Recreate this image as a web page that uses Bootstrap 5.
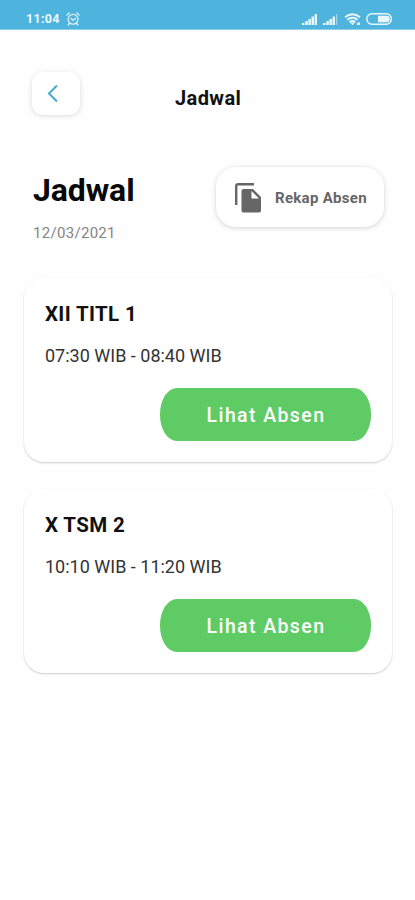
<!DOCTYPE html>
<html lang="id">
<head>
<meta charset="utf-8">
<meta name="viewport" content="width=device-width, initial-scale=1">
<title>Jadwal</title>
<link href="https://cdn.jsdelivr.net/npm/bootstrap@5.3.0/dist/css/bootstrap.min.css" rel="stylesheet">
<style>
body { font-family: Roboto, "Liberation Sans", sans-serif; background: #fefefe; color: #111; min-height: 900px; }
svg { display: block; flex: none; }
.status-bar { height: 30px; background: #4eb3dd; padding: 8px 22px 0 26px; border-bottom: 1px solid #8dcfe9; }
.clock { font-size: 12.5px; font-weight: 700; line-height: 22px; letter-spacing: .3px; color: #eefaff; }
.alarm-icon { margin-left: -2px; }
.signal-icons { margin-top: 4px; }
.top-bar { padding: 42px 32px 0; height: 137px; }
.back-btn { width: 48px; height: 43px; border-radius: 11px; background: #fff; box-shadow: 0 1px 5px rgba(0,0,0,.15); }
.screen-title { font-size: 20px; line-height: 24px; font-weight: 700; margin: 14px 0 0 95px; letter-spacing: .4px; }
.heading-row { padding: 0 31px 0 33px; height: 111px; }
.page-title { font-size: 32px; line-height: 38px; font-weight: 700; margin: 4px 0 0; letter-spacing: -.1px; color: #080808; }
.page-date { font-size: 15px; line-height: 18px; margin-top: 15px; letter-spacing: .3px; color: #858585; }
.recap-btn { width: 168px; height: 60px; border-radius: 20px; background: #fff; box-shadow: 0 1px 5px rgba(0,0,0,.18); padding: 2px 0 0 19px; color: #666; font-size: 15px; font-weight: 700; letter-spacing: .3px; white-space: nowrap; }
.recap-label { margin-left: 14px; }
.schedule { gap: 27px; padding: 0 23px 0 24px; }
.schedule-card { height: 184px; border: 0; border-radius: 20px; background: #fff; box-shadow: 0 1px 2px rgba(0,0,0,.2); padding: 24px 21px 0 21px; }
.class-name { font-size: 20.5px; line-height: 24px; font-weight: 700; margin: 0; letter-spacing: .35px; color: #111; }
.class-time { font-size: 18px; line-height: 22px; margin: 19px 0 21px; color: #333; }
.view-btn { width: 211px; height: 53px; border-radius: 17px / 26px; background: #5fcb64; color: #fff; font-size: 19.5px; font-weight: 500; letter-spacing: 1.4px; padding: 2px 0 0 1px; }
.view-btn:hover { background: #55bd5a; color: #fff; }
</style>
</head>
<body>
<header class="status-bar d-flex justify-content-between align-items-start">
  <div class="d-flex align-items-center gap-2">
    <span class="clock">11:04</span>
    <svg class="alarm-icon" width="14" height="14" viewBox="0 0 14 14" fill="none" stroke="#e2f5fc" stroke-width="1.3" stroke-linecap="round"><circle cx="7" cy="7.3" r="4.9"/><path d="M1 3 3.2 1M13 3 10.8 1M3.3 11.5 2.2 13M10.7 11.5l1.1 1.5M5 6.5l2 1.7 2.2-1.7"/></svg>
  </div>
  <svg class="signal-icons" width="92" height="14" viewBox="0 0 92 14" fill="#e8f7fd">
    <path d="M1 13v-2h2.500v2zM4.300 13V9h2.500v4zM7.400 13V7h2.500v6zM10.500 13V4.500H13V13zM13.600 13V2H16v11z"/>
    <path d="M22 13v-2h2.500v2zM25.300 13V9h2.500v4zM28.400 13V7h2.500v6zM31.500 13V4.500H34V13z"/><path d="M35 13V2h1.3v11z" opacity=".5"/>
    <g fill="none" stroke="#e8f7fd" stroke-width="2"><path d="M44 5.200q7.500-6 15 0M46.300 7.800q5.200-4 10.400 0M48.600 10.200q2.900-2.200 5.800 0"/></g>
    <path d="m49.500 11.200 2 2 2-2q-2-1.500-4 0zM56 10.500h3V13h-3z"/>
    <rect x="65.800" y="1.800" width="24.600" height="10.400" rx="5.200" fill="none" stroke="#e8f7fd" stroke-width="1.500"/>
    <path d="M77 3.700h8.500a3.300 3.300 0 0 1 0 6.600H77z"/>
  </svg>
</header>

<nav class="top-bar d-flex align-items-start" aria-label="Navigasi">
  <button class="btn back-btn border-0 d-flex align-items-center justify-content-center p-0 pe-2" aria-label="Kembali">
    <svg width="16" height="20" viewBox="0 0 16 20" fill="none" stroke="#45a9cb" stroke-width="2"><path d="M13 1.500 5 9.500l8 8"/></svg>
  </button>
  <h1 class="screen-title">Jadwal</h1>
</nav>

<main>
  <section class="heading-row d-flex justify-content-between align-items-start">
    <div>
      <h2 class="page-title">Jadwal</h2>
      <div class="page-date">12/03/2021</div>
    </div>
    <button class="btn recap-btn border-0 d-flex align-items-center">
      <svg width="26" height="30" viewBox="0 0 26 30"><path d="M1.200 22V3.200Q1.200 1.200 3.200 1.200H19" fill="none" stroke="#666" stroke-width="2.400"/><path fill="#666" fill-rule="evenodd" d="M8.500 6H18l8 8v13.500q0 2-2 2H8.500q-2 0-2-2V8q0-2 2-2zm8 2v7.500H24z"/></svg>
      <span class="recap-label">Rekap Absen</span>
    </button>
  </section>

  <section class="schedule d-flex flex-column">
    <article class="card schedule-card">
      <h3 class="class-name">XII TITL 1</h3>
      <p class="class-time">07:30 WIB - 08:40 WIB</p>
      <button class="btn view-btn border-0 align-self-end">Lihat Absen</button>
    </article>
    <article class="card schedule-card">
      <h3 class="class-name">X TSM 2</h3>
      <p class="class-time">10:10 WIB - 11:20 WIB</p>
      <button class="btn view-btn border-0 align-self-end">Lihat Absen</button>
    </article>
  </section>
</main>
<script src="https://cdn.jsdelivr.net/npm/bootstrap@5.3.0/dist/js/bootstrap.bundle.min.js"></script>
</body>
</html>
